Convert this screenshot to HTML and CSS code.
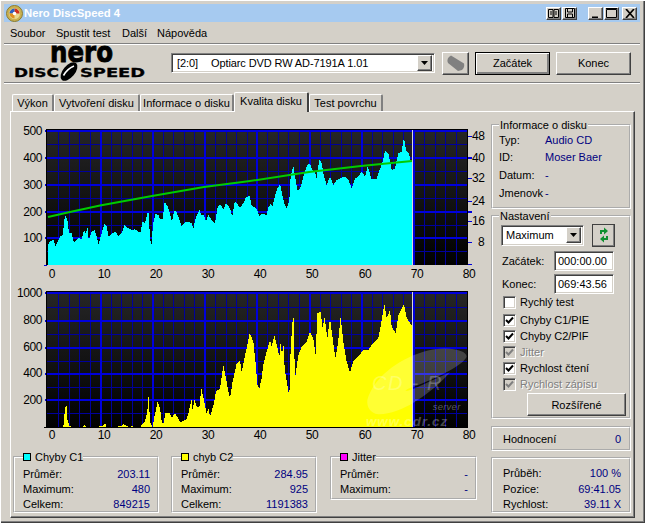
FILE: index.html
```html
<!DOCTYPE html>
<html lang="cs">
<head>
<meta charset="utf-8">
<title>Nero DiscSpeed 4</title>
<link rel="stylesheet" href="styles.css">
</head>
<body>
<div class="window">
  <div class="titlebar">
    <svg class="app-icon" width="17" height="17" viewBox="0 0 17 17"><circle cx="8.5" cy="8.5" r="8" fill="#c8b050" stroke="#8a7a30"/><circle cx="8.5" cy="8.5" r="5.5" fill="#e8d890"/><path d="M8.5 3.5a5 5 0 0 1 5 5h-5z" fill="#d03020"/><path d="M3.5 8.5a5 5 0 0 1 5-5v5z" fill="#3060c0"/><path d="M8.5 13.5a5 5 0 0 1-5-5h5z" fill="#e09020"/><circle cx="8.5" cy="8.5" r="1.8" fill="#fff"/></svg>
    <span class="title-text">Nero DiscSpeed 4</span>
    <div class="title-buttons">
      <span class="cap-btn"><svg width="11" height="9" viewBox="0 0 11 9"><path d="M.5.5h4.5v8H.5zM6 .5h4.5v8H6z" fill="none" stroke="#000"/><path d="M2 3h2M2 5h2M7 3h2M7 5h2" stroke="#000"/></svg></span>
      <span class="cap-btn"><svg width="10" height="10" viewBox="0 0 10 10"><path d="M.5.5h9v9h-9z" fill="none" stroke="#000"/><path d="M2.5 1v3h5V1M2.5 9V6h5v3" fill="none" stroke="#000"/></svg></span>
      <span class="cap-btn cap-gap"><svg width="9" height="9" viewBox="0 0 9 9"><path d="M1 7.5h6v1.5H1z" fill="#000"/></svg></span>
      <span class="cap-btn"><svg width="11" height="10" viewBox="0 0 11 10"><path d="M.5 1.5h10v8H.5z" fill="none" stroke="#000"/><path d="M0 .5h11" stroke="#000"/></svg></span>
      <span class="cap-btn cap-close"><svg width="10" height="9" viewBox="0 0 10 9"><path d="M1 0l8 9M9 0l-8 9" stroke="#000" stroke-width="1.7" fill="none"/></svg></span>
    </div>
  </div>
  <nav class="menubar"><span>Soubor</span><span>Spustit test</span><span>Další</span><span>Nápověda</span></nav>
  <div class="toolbar">
    <svg class="logo" width="134" height="38" viewBox="0 0 134 38">
      <text class="logo-nero" x="36" y="18" textLength="63" lengthAdjust="spacingAndGlyphs">nero</text>
      <text class="logo-disc" x="0" y="32.5" textLength="45" lengthAdjust="spacingAndGlyphs">DISC</text>
      <text class="logo-disc" x="66" y="32.5" textLength="65" lengthAdjust="spacingAndGlyphs">SPEED</text>
      <ellipse cx="55" cy="27.5" rx="11" ry="6" transform="rotate(-50 55 27.5)" fill="#000"/>
      <path d="M49.500 31.500C52 27 55 24 60 22" stroke="#fff" stroke-width="1.600" fill="none"/>
    </svg>
    <div class="drive-combo">
      <span class="drive-text"><span class="drive-id">[2:0]</span>Optiarc DVD RW AD-7191A 1.01</span>
      <span class="combo-arrow"><svg width="7" height="4" viewBox="0 0 7 4"><path d="M0 0h7L3.500 4z" fill="#000"/></svg></span>
    </div>
    <span class="btn btn-icon"><svg width="20" height="18" viewBox="0 0 20 18"><path d="M5 1.500L18 9.500Q19 13 16 16L12 17L2 9Q0 4 5 1.500z" fill="#808080"/></svg></span>
    <span class="btn btn-tool btn-default">Začátek</span>
    <span class="btn btn-tool">Konec</span>
  </div>
  <div class="tabs">
    <span class="tab tab-1">Výkon</span>
    <span class="tab tab-2">Vytvoření disku</span>
    <span class="tab tab-3">Informace o disku</span>
    <span class="tab tab-active tab-4">Kvalita disku</span>
    <span class="tab tab-5">Test povrchu</span>
  </div>
  <div class="panel">
    <div class="main-col">
      <svg class="chart" width="478" height="165" viewBox="12 120 478 165">
        <defs>
          <linearGradient id="plotbg" x1="0" y1="0" x2="0" y2="1"><stop offset="0" stop-color="#262626"/><stop offset="1" stop-color="#000"/></linearGradient>
        </defs>
        <rect x="47" y="129" width="421" height="136" fill="url(#plotbg)"/>
        <path class="g-thin" d="M58.500 130V265M69 130V265M79.500 130V265M90 130V265M111 130V265M121 130V265M132 130V265M142 130V265M163 130V265M173.500 130V265M184 130V265M194.500 130V265M215.500 130V265M226 130V265M236.500 130V265M247 130V265M267.500 130V265M278 130V265M288.500 130V265M299 130V265M320 130V265M330.500 130V265M341 130V265M351.500 130V265M372 130V265M382.500 130V265M393 130V265M403.500 130V265M424.500 130V265M435 130V265M445.500 130V265M456 130V265M47 144.500H467M47 171.500H467M47 198.500H467M47 225H467M47 251.500H467"/>
        <path class="g-thick" d="M100.500 130V265M152.500 130V265M204.500 130V265M257 130V265M309.500 130V265M361.500 130V265M414 130V265M45 131H467M45 158H472M45 185H467M45 212H472M45 238H467"/>
        <path class="g-tick" d="M467 136H472M467 178H472M467 201H472M467 221H472M467 242H472M467 264.500H472M44 265H47"/>
        <g transform="translate(10 120) scale(.33333)"><polygon class="cyan" points="114,435 114,375 120,365 130,360 137,378 143,365 150,350 158,345 165,285 172,300 177,340 185,340 192,368 200,360 206,352 215,358 222,330 228,342 232,318 236,360 245,335 253,330 260,350 266,375 272,350 283,312 290,318 296,350 305,340 318,335 325,350 335,340 343,315 350,322 357,325 365,330 375,328 385,335 392,335 398,305 405,310 415,270 420,350 424,380 429,315 436,282 445,285 450,298 458,298 464,246 472,258 480,280 486,305 492,275 498,272 505,290 515,318 525,306 535,305 545,310 550,325 557,295 568,270 574,285 582,285 588,305 595,285 605,300 615,310 622,265 630,252 640,268 648,250 660,265 667,290 674,245 680,250 690,262 700,250 708,232 720,228 722,435"/></g>
        <g transform="translate(250 120) scale(.33333)"><polygon class="cyan" points="0,435 0,232 5,258 15,262 22,270 28,290 35,280 50,285 55,262 62,252 68,258 72,240 80,210 90,192 97,225 103,250 110,265 118,240 122,170 130,138 137,180 142,212 150,205 155,190 160,170 172,135 180,130 186,150 195,155 200,175 208,118 215,130 222,170 230,195 240,170 250,195 260,180 270,175 285,170 295,180 305,205 315,175 325,170 335,155 345,170 353,140 365,178 380,178 385,160 397,130 405,93 415,100 425,150 435,145 445,100 455,95 462,52 468,90 476,100 483,125 489,130 489,435"/></g>
        <path class="speed" d="M48 217L70 212L100 205.500L152 196L204 187L250 181L309 172L361 166L412 161"/>
        <path class="marker" d="M412.500 130V265"/>
        <path class="axis" d="M46.500 129V265M46 129.500H468M467.500 129V265"/>
        <text class="yl" x="42" y="135">500</text><text class="yl" x="42" y="162">400</text><text class="yl" x="42" y="189">300</text><text class="yl" x="42" y="216">200</text><text class="yl" x="42" y="242">100</text>
        <text class="rl" x="472" y="140">48</text><text class="rl" x="472" y="162">40</text><text class="rl" x="472" y="182">32</text><text class="rl" x="472" y="205">24</text><text class="rl" x="472" y="225">16</text><text class="rl" x="478" y="246">8</text>
        <text class="xl" x="52" y="278">0</text><text class="xl" x="104" y="278">10</text><text class="xl" x="156" y="278">20</text><text class="xl" x="208" y="278">30</text><text class="xl" x="260" y="278">40</text><text class="xl" x="312" y="278">50</text><text class="xl" x="365" y="278">60</text><text class="xl" x="417" y="278">70</text><text class="xl" x="469" y="278">80</text>
      </svg>
      <svg class="chart" width="478" height="160" viewBox="12 285 478 160">
        <rect x="47" y="291" width="421" height="136" fill="url(#plotbg)"/>
        <path class="g-thin" d="M58.500 292V427M69 292V427M79.500 292V427M90 292V427M111 292V427M121 292V427M132 292V427M142 292V427M163 292V427M173.500 292V427M184 292V427M194.500 292V427M215.500 292V427M226 292V427M236.500 292V427M247 292V427M267.500 292V427M278 292V427M288.500 292V427M299 292V427M320 292V427M330.500 292V427M341 292V427M351.500 292V427M372 292V427M382.500 292V427M393 292V427M403.500 292V427M424.500 292V427M435 292V427M445.500 292V427M456 292V427M47 307H467M47 334H467M47 361H467M47 387H467M47 413.500H467"/>
        <path class="g-thick" d="M100.500 292V427M152.500 292V427M204.500 292V427M257 292V427M309.500 292V427M361.500 292V427M414 292V427M45 293H467M45 320.500H467M45 347.500H467M45 373.500H467M45 400H467"/>
        <g transform="translate(10 285) scale(.33333)"><polygon class="yellow" points="160,427 165,370 170,362 172,405 178,422 185,427 218,427 222,420 230,427 265,427 270,423 280,422 285,414 290,427 320,427 325,423 335,423 340,417 350,423 362,427 365,423 372,427 390,427 395,420 405,410 412,380 416,330 420,410 428,427 432,400 437,380 443,348 450,370 455,410 460,418 467,382 480,385 485,398 495,385 505,400 510,413 520,408 530,402 535,385 545,342 548,378 553,342 560,365 568,368 574,310 582,345 590,385 596,372 600,395 612,355 618,320 630,310 640,240 648,280 655,320 660,340 667,295 680,235 690,228 695,260 703,222 712,180 720,140 722,427"/></g>
        <g transform="translate(250 285) scale(.33333)">
          <polygon class="yellow" points="0,427 0,145 10,170 17,235 22,300 28,310 35,280 40,238 50,200 60,165 65,185 73,152 82,185 88,215 92,172 96,215 100,172 104,250 112,300 118,335 122,190 130,78 135,280 145,210 155,185 170,170 180,140 190,160 197,210 202,85 212,80 218,130 224,95 232,160 240,100 248,160 256,220 264,175 272,95 280,170 290,230 300,262 310,230 325,215 340,195 355,195 365,180 385,160 392,125 403,55 410,100 420,75 425,125 437,145 445,90 462,58 470,98 483,120 489,120 489,427"/>
          <path class="wm-disc" d="M352 345C370 280 440 225 520 200C590 180 650 195 650 215C640 240 560 280 490 305C450 320 470 320 490 312L600 262C540 330 450 390 385 388C360 385 350 365 352 345z"/>
          <text class="wm-big" x="366" y="315">CD - R</text>
          <text class="wm-small" x="548" y="376">server</text>
          <text class="wm-url" x="348" y="422">www.cdr.cz</text>
        </g>
        <path class="marker" d="M412.500 292V427"/>
        <path class="axis" d="M46.500 291V427M46 291.500H468M467.500 291V427M44 427H468"/>
        <text class="yl" x="42" y="297">1000</text><text class="yl" x="42" y="324">800</text><text class="yl" x="42" y="351">600</text><text class="yl" x="42" y="377">400</text><text class="yl" x="42" y="404">200</text>
        <text class="xl" x="52" y="439">0</text><text class="xl" x="104" y="439">10</text><text class="xl" x="156" y="439">20</text><text class="xl" x="208" y="439">30</text><text class="xl" x="260" y="439">40</text><text class="xl" x="312" y="439">50</text><text class="xl" x="365" y="439">60</text><text class="xl" x="417" y="439">70</text><text class="xl" x="469" y="439">80</text>
      </svg>
      <div class="stat-groups">
        <fieldset class="group stat-group">
          <legend class="swatch-legend"><i class="swatch swatch-cyan"></i>Chyby C1</legend>
          <div class="kv"><span>Průměr:</span><b>203.11</b></div>
          <div class="kv"><span>Maximum:</span><b>480</b></div>
          <div class="kv"><span>Celkem:</span><b>849215</b></div>
        </fieldset>
        <fieldset class="group stat-group">
          <legend class="swatch-legend"><i class="swatch swatch-yellow"></i>chyb C2</legend>
          <div class="kv"><span>Průměr:</span><b>284.95</b></div>
          <div class="kv"><span>Maximum:</span><b>925</b></div>
          <div class="kv"><span>Celkem:</span><b>1191383</b></div>
        </fieldset>
        <fieldset class="group stat-group stat-short">
          <legend class="swatch-legend"><i class="swatch swatch-magenta"></i>Jitter</legend>
          <div class="kv"><span>Průměr:</span><b>-</b></div>
          <div class="kv"><span>Maximum:</span><b>-</b></div>
        </fieldset>
      </div>
    </div>
    <aside class="side-col">
      <fieldset class="group info-group">
        <legend>Informace o disku</legend>
        <div class="info-grid">
          <span>Typ:</span><b>Audio CD</b>
          <span>ID:</span><b>Moser Baer</b>
          <span>Datum:</span><b>-</b>
          <span>Jmenovk</span><b>-</b>
        </div>
      </fieldset>
      <fieldset class="group settings-group">
        <legend>Nastavení</legend>
        <div class="speed-row">
          <div class="speed-combo"><span>Maximum</span><span class="combo-arrow"><svg width="7" height="4" viewBox="0 0 7 4"><path d="M0 0h7L3.500 4z" fill="#000"/></svg></span></div>
          <span class="btn btn-refresh"><svg width="14" height="18" viewBox="0 0 14 18"><path d="M3 8V4h4V1.500L11 5 7 8.500V6H5v2z" fill="#109030"/><path d="M11 10v4H7v2.500L3 13l4-3.500V12h2v-2z" fill="#109030"/></svg></span>
        </div>
        <div class="time-row"><span>Začátek:</span><span class="time-input">000:00.00</span></div>
        <div class="time-row"><span>Konec:</span><span class="time-input">069:43.56</span></div>
        <div class="checks">
          <div class="check-row"><i class="check"></i>Rychlý test</div>
          <div class="check-row"><i class="check checked"><svg width="9" height="9" viewBox="0 0 9 9"><path d="M1 4l2.500 2.500L8 1.500" fill="none" stroke="#000" stroke-width="2"/></svg></i>Chyby C1/PIE</div>
          <div class="check-row"><i class="check checked"><svg width="9" height="9" viewBox="0 0 9 9"><path d="M1 4l2.500 2.500L8 1.500" fill="none" stroke="#000" stroke-width="2"/></svg></i>Chyby C2/PIF</div>
          <div class="check-row disabled"><i class="check checked"><svg width="9" height="9" viewBox="0 0 9 9"><path d="M1 4l2.500 2.500L8 1.500" fill="none" stroke="#808080" stroke-width="2"/></svg></i>Jitter</div>
          <div class="check-row"><i class="check checked"><svg width="9" height="9" viewBox="0 0 9 9"><path d="M1 4l2.500 2.500L8 1.500" fill="none" stroke="#000" stroke-width="2"/></svg></i>Rychlost čtení</div>
          <div class="check-row disabled"><i class="check checked"><svg width="9" height="9" viewBox="0 0 9 9"><path d="M1 4l2.500 2.500L8 1.500" fill="none" stroke="#808080" stroke-width="2"/></svg></i>Rychlost zápisu</div>
        </div>
        <span class="btn btn-more">Rozšířené</span>
      </fieldset>
      <div class="etched rating"><span>Hodnocení</span><b>0</b></div>
      <div class="etched progress">
        <div class="kv"><span>Průběh:</span><b>100 %</b></div>
        <div class="kv"><span>Pozice:</span><b>69:41.05</b></div>
        <div class="kv"><span>Rychlost:</span><b>39.11 X</b></div>
      </div>
    </aside>
  </div>
</div>
</body>
</html>
```
FILE: styles.css
```css
* { box-sizing: border-box; }
html, body { margin: 0; padding: 0; }
body { width: 645px; height: 523px; overflow: hidden; font: 11px/14px "Liberation Sans", Arial, sans-serif; color: #000; background: #d4d0c8; }
b { font-weight: normal; color: #000080; }
i { font-style: normal; }

.window { width: 645px; height: 523px; padding: 4px 5px 0 4px; background: #d4d0c8; box-shadow: inset 1px 1px #fff, inset -1px -1px #404040, inset -2px -2px #808080; overflow: hidden; }

.titlebar { height: 18px; display: flex; align-items: center; background: #a6caf0; padding-left: 2px; }
.app-icon { margin-right: 1px; flex: none; }
.title-text { color: #fff; font-weight: bold; font-size: 11.3px; white-space: nowrap; }
.title-buttons { margin-left: auto; display: flex; gap: 1px; padding-right: 3px; }
.cap-btn { width: 15px; height: 13px; display: flex; align-items: center; justify-content: center; background: #d4d0c8; border: 1px solid; border-color: #fff #404040 #404040 #fff; box-shadow: inset -1px -1px #808080; }
.cap-gap { margin-left: 10px; }
.cap-close { margin-left: 2px; }

.menubar { height: 21px; display: flex; align-items: center; padding-left: 6px; }
.menubar span:nth-child(1) { width: 46px; }
.menubar span:nth-child(2) { width: 66px; }
.menubar span:nth-child(3) { width: 35px; }

.toolbar { height: 40px; display: flex; align-items: center; border-top: 1px solid #808080; border-bottom: 1px solid #808080; box-shadow: inset 0 1px #fff, 0 1px #fff; padding-left: 10px; }
.logo { flex: none; margin-right: 23px; overflow: visible; }
.logo-nero { font: bold 29px "DejaVu Sans", sans-serif; fill: #000; stroke: #000; stroke-width: .9px; }
.logo-disc { font: bold 12px "DejaVu Sans", sans-serif; fill: #000; stroke: #000; stroke-width: .3px; }

.drive-combo { width: 264px; height: 20px; margin-right: 7px; display: flex; align-items: center; justify-content: space-between; background: #fff; border: 1px solid; border-color: #808080 #fff #fff #808080; box-shadow: inset 1px 1px #404040, inset -1px -1px #d4d0c8; padding: 2px; }
.drive-text { padding-left: 3px; white-space: nowrap; letter-spacing: -.1px; }
.drive-id { display: inline-block; width: 34px; }
.combo-arrow { width: 15px; height: 16px; display: flex; align-items: center; justify-content: center; background: #d4d0c8; border: 1px solid; border-color: #fff #404040 #404040 #fff; box-shadow: inset -1px -1px #808080; }

.btn { display: flex; align-items: center; justify-content: center; background: #d4d0c8; border: 1px solid; border-color: #fff #404040 #404040 #fff; box-shadow: inset -1px -1px #808080; }
.btn-icon { width: 27px; height: 23px; margin-right: 6px; }
.btn-tool { width: 75px; height: 23px; margin-right: 6px; }
.btn-default { outline: 1px solid #000; outline-offset: -1px; box-shadow: inset 1px 1px #fff, inset -2px -2px #808080; }

.tabs { height: 20px; margin-top: 9px; position: relative; display: flex; align-items: flex-end; padding-left: 8px; margin-bottom: -1px; z-index: 1; }
.tab { height: 17px; display: flex; align-items: center; justify-content: center; white-space: nowrap; background: #d4d0c8; border-top: 1px solid #fff; border-left: 1px solid #fff; border-right: 2px solid #808080; margin-bottom: 1px; border-top-left-radius: 2px; border-top-right-radius: 2px; }
.tab-1 { width: 42px; }
.tab-2 { width: 86px; }
.tab-3 { width: 94px; }
.tab-4 { width: 75px; }
.tab-5 { width: 74px; }
.tab-active { height: 20px; margin-bottom: 0; padding-bottom: 3px; border-right-color: #404040; }

.panel { width: 625px; height: 407px; margin-left: 6px; display: flex; background: #d4d0c8; border: 1px solid; border-color: #fff #404040 #404040 #fff; box-shadow: inset -1px -1px #808080; padding: 8px 0 0 1px; }
.main-col { width: 479px; flex: none; }
.chart { display: block; }
.g-thin { stroke: #00009c; stroke-width: 1; fill: none; shape-rendering: crispEdges; }
.g-thick { stroke: #0000dc; stroke-width: 2; fill: none; shape-rendering: crispEdges; }
.g-tick { stroke: #0000dc; stroke-width: 1; fill: none; shape-rendering: crispEdges; }
.axis { stroke: #000; stroke-width: 1; fill: none; shape-rendering: crispEdges; }
.cyan { fill: #00ffff; shape-rendering: crispEdges; }
.yellow { fill: #ffff00; shape-rendering: crispEdges; }
.speed { stroke: #00cc00; stroke-width: 2; fill: none; }
.marker { stroke: #d8d8d8; stroke-width: 1; shape-rendering: crispEdges; }
.yl, .rl, .xl { font: 12px "Liberation Sans", sans-serif; fill: #000; letter-spacing: -.4px; }
.yl { text-anchor: end; }
.xl { text-anchor: middle; }
.wm-disc { fill: #fff; fill-opacity: .2; stroke: none; }
.wm-big { font: italic 60px "Liberation Sans", sans-serif; letter-spacing: 5px; fill: #fff; fill-opacity: .25; }
.wm-small { font: italic 28px "Liberation Sans", sans-serif; fill: #ddd; fill-opacity: .4; letter-spacing: 1px; }
.wm-url { font: italic bold 40px "Liberation Sans", sans-serif; fill: #fff; fill-opacity: .3; letter-spacing: 3px; }

.group { margin: 0; padding: 0; min-width: 0; border: 2px groove #fff; }
.group legend { padding: 0 1px; margin-left: 6px; line-height: 14px; height: 14px; white-space: nowrap; }

.stat-groups { display: flex; margin-left: 1px; margin-top: 5px; gap: 12px; align-items: flex-start; }
.stat-group { width: 146px; height: 63px; padding: 3px 7px 0 8px; }
.stat-short { width: 147px; height: 50px; margin-left: 1px; }
.group .swatch-legend { display: flex; align-items: center; margin-left: 0; padding: 0; }
.swatch { width: 8px; height: 8px; border: 1px solid #000; margin-right: 4px; flex: none; }
.swatch-cyan { background: #00ffff; }
.swatch-yellow { background: #ffff00; }
.swatch-magenta { background: #ff00ff; }
.kv { display: flex; justify-content: space-between; height: 15px; line-height: 15px; }

.side-col { width: 140px; flex: none; margin-top: -2px; }
.info-group { height: 91px; }
.info-grid { display: grid; grid-template-columns: 46px 1fr; grid-template-rows: 16px 18px 18px 18px; align-items: center; padding-left: 6px; margin-top: 0; }
.settings-group { height: 210px; padding: 1px 0 0 8px; }
.settings-group legend { margin-left: -2px; }

.speed-row { display: flex; align-items: center; height: 22px; gap: 8px; }
.speed-combo { width: 83px; height: 21px; display: flex; align-items: center; justify-content: space-between; background: #fff; border: 1px solid; border-color: #808080 #fff #fff #808080; box-shadow: inset 1px 1px #404040, inset -1px -1px #d4d0c8; padding: 2px 2px 2px 4px; }
.btn-refresh { width: 23px; height: 23px; outline: 1px solid #404040; outline-offset: -1px; }
.time-row { display: flex; align-items: center; justify-content: space-between; width: 113px; height: 20px; margin-top: 5px; padding-left: 1px; }
.time-row + .time-row { margin-top: 3px; }
.time-input { width: 60px; height: 20px; display: flex; align-items: center; padding-left: 3px; background: #fff; border: 1px solid; border-color: #808080 #fff #fff #808080; box-shadow: inset 1px 1px #404040, inset -1px -1px #d4d0c8; }
.checks { margin-top: 2px; }
.check-row { display: flex; align-items: center; height: 16px; padding-left: 2px; }
.check-row:first-child { margin-top: -2px; margin-bottom: 2px; }
.check { width: 13px; height: 13px; margin-right: 4px; display: flex; align-items: center; justify-content: center; background: #fff; border: 1px solid; border-color: #808080 #fff #fff #808080; box-shadow: inset 1px 1px #404040, inset -1px -1px #d4d0c8; }
.disabled { color: #808080; text-shadow: 1px 1px #fff; }
.disabled .check { background: #d4d0c8; }
.btn-more { width: 99px; height: 23px; margin: 1px 0 0 26px; }

.etched { border: 2px groove #fff; }
.rating { height: 25px; margin-top: 7px; display: flex; align-items: center; justify-content: space-between; padding: 0 8px 0 10px; }
.progress { height: 56px; margin-top: 6px; padding: 6px 8px 0 10px; }
.progress .kv:first-child { height: 17px; line-height: 17px; }
```
